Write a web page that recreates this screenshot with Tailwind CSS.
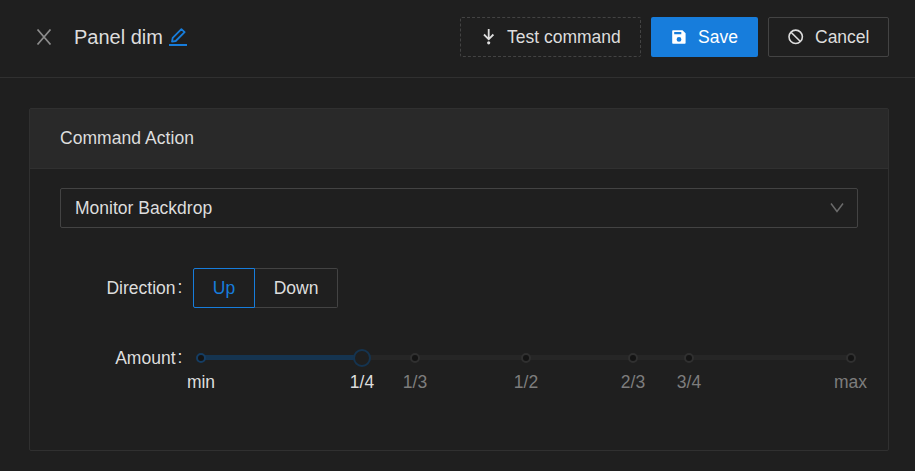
<!DOCTYPE html>
<html lang="en">
<head>
<meta charset="utf-8">
<title>Panel dim</title>
<script src="https://cdn.jsdelivr.net/npm/@tailwindcss/browser@4"></script>
</head>
<body class="h-[471px] overflow-hidden bg-[#1f1f1f] font-['Liberation_Sans',Arial,sans-serif] text-[17.5px] leading-[28px] text-[#dddddd]">
<header class="flex h-[78px] items-center border-b border-[#303030] pt-0 pr-[26px] pb-[3px] pl-[36px]">
  <button aria-label="Close" class="flex text-[#8c8c8c]">
    <svg class="h-4 w-4" viewBox="0 0 16 16" fill="none" stroke="currentColor" stroke-width="1.7"><path d="M1.5 .5 14.5 15.5M14.5 .5 1.5 15.5"/></svg>
  </button>
  <h1 class="ml-[22px] text-[20px] whitespace-nowrap">Panel dim</h1>
  <button aria-label="Rename" class="ml-[6px] flex h-[18px] w-[18px] border-b-2 border-[#177ddc] text-[#177ddc]">
    <svg class="h-[17px] w-[18px] shrink-0" viewBox="0 0 18 17" fill="none" stroke="currentColor" stroke-width="1.8" stroke-linejoin="round"><path d="M3 13.6 3.7 9.9 12.4 1.2 15.6 4.2 6.7 13Z"/></svg>
  </button>
  <div class="ml-auto flex gap-[10px]">
    <button class="flex h-10 w-[181px] items-center rounded-[2px] border border-dashed border-[#434343] pl-[20px] whitespace-nowrap">
      <svg class="h-4 w-4" viewBox="0 0 16 16" fill="none" stroke="currentColor" stroke-width="1.8"><path d="M7.7 0V10M3 5.5 7.7 10.3 12.4 5.5"/><circle cx="7.7" cy="13.8" r="1.6" fill="currentColor" stroke="none"/></svg>
      <span class="ml-[10px]">Test command</span>
    </button>
    <button class="flex h-10 w-[107px] items-center rounded-[2px] bg-[#177ddc] pl-[20px] text-white">
      <svg class="h-4 w-4" viewBox="0 0 16 16" fill="currentColor" fill-rule="evenodd"><path d="M2 1.2H11.5L14.6 4.3V14Q14.6 14.8 13.8 14.8H2Q1.2 14.8 1.2 14V2Q1.2 1.2 2 1.2ZM3.2 3V5.3H10.3V3ZM8 8A2.4 2.4 0 1 0 8 12.8 2.4 2.4 0 1 0 8 8Z"/></svg>
      <span class="ml-[11px]">Save</span>
    </button>
    <button class="flex h-10 w-[121px] items-center rounded-[2px] border border-[#434343] pl-[19px]">
      <svg class="h-4 w-4" viewBox="0 0 16 16" fill="none" stroke="currentColor" stroke-width="1.6"><circle cx="7.7" cy="7.8" r="6.7"/><path d="M3 3.2 12.4 12.5"/></svg>
      <span class="ml-[11px]">Cancel</span>
    </button>
  </div>
</header>
<main class="mt-[30px] mr-[26px] ml-[29px] h-[343px] rounded-[2px] border border-[#303030]">
  <h2 class="flex h-[60px] items-center border-b border-[#303030] bg-[#292929] pb-[2px] pl-[30px] tracking-[0.05px]">Command Action</h2>
  <div class="px-[30px] pt-[19px]">
    <button class="flex h-10 w-full items-center justify-between rounded-[2px] border border-[#434343] pr-[13px] pl-[14px]">
      <span>Monitor Backdrop</span>
      <svg class="h-[10px] w-[14px] text-[#6b6b6b]" viewBox="0 0 14 10" fill="none" stroke="currentColor" stroke-width="1.5"><path d="M1 .5 7 8.5 13 .5"/></svg>
    </button>
    <div class="mt-10 flex h-10 items-center">
      <div class="flex w-[133px] justify-end pr-[10px]"><span>Direction</span><span class="-mt-px w-[7.5px] pl-[2px]">:</span></div>
      <button class="h-10 w-[62px] rounded-l-[2px] border border-[#177ddc] text-[#177ddc]">Up</button>
      <button class="h-10 w-[83px] rounded-r-[2px] border border-l-0 border-[#434343]">Down</button>
    </div>
    <div class="mt-[30px] flex h-[58px]">
      <div class="flex h-10 w-[133px] items-center justify-end pr-[10px]"><span>Amount</span><span class="-mt-[2px] w-[7.5px] pl-[2px]">:</span></div>
      <div class="relative mt-[17px] ml-[8px] h-[5px] w-[650px] bg-[#262626]">
        <div class="h-full bg-[#153450]" style="width:24.8%"></div>
        <i class="absolute top-[-2px] -ml-[5px] h-[10px] w-[10px] rounded-full border-2 border-[#153d63] bg-[#141414]" style="left:0"></i>
        <i class="absolute top-[-2px] -ml-[5px] h-[10px] w-[10px] rounded-full border-2 border-[#303030] bg-[#141414]" style="left:32.92%"></i>
        <i class="absolute top-[-2px] -ml-[5px] h-[10px] w-[10px] rounded-full border-2 border-[#303030] bg-[#141414]" style="left:50%"></i>
        <i class="absolute top-[-2px] -ml-[5px] h-[10px] w-[10px] rounded-full border-2 border-[#303030] bg-[#141414]" style="left:66.46%"></i>
        <i class="absolute top-[-2px] -ml-[5px] h-[10px] w-[10px] rounded-full border-2 border-[#303030] bg-[#141414]" style="left:75.08%"></i>
        <i class="absolute top-[-2px] -ml-[5px] h-[10px] w-[10px] rounded-full border-2 border-[#303030] bg-[#141414]" style="left:100%"></i>
        <i class="absolute top-[-6px] -ml-[9px] h-[18px] w-[18px] rounded-full border-2 border-[#153450] bg-[#1f1f1f]" style="left:24.77%"></i>
        <span class="absolute top-[13px] -translate-x-1/2" style="left:0">min</span>
        <span class="absolute top-[13px] -translate-x-1/2" style="left:24.77%">1/4</span>
        <span class="absolute top-[13px] -translate-x-1/2 text-[#7d7d7d]" style="left:32.92%">1/3</span>
        <span class="absolute top-[13px] -translate-x-1/2 text-[#7d7d7d]" style="left:50%">1/2</span>
        <span class="absolute top-[13px] -translate-x-1/2 text-[#7d7d7d]" style="left:66.46%">2/3</span>
        <span class="absolute top-[13px] -translate-x-1/2 text-[#7d7d7d]" style="left:75.08%">3/4</span>
        <span class="absolute top-[13px] -translate-x-1/2 text-[#7d7d7d]" style="left:99.92%">max</span>
      </div>
    </div>
  </div>
</main>
</body>
</html>
